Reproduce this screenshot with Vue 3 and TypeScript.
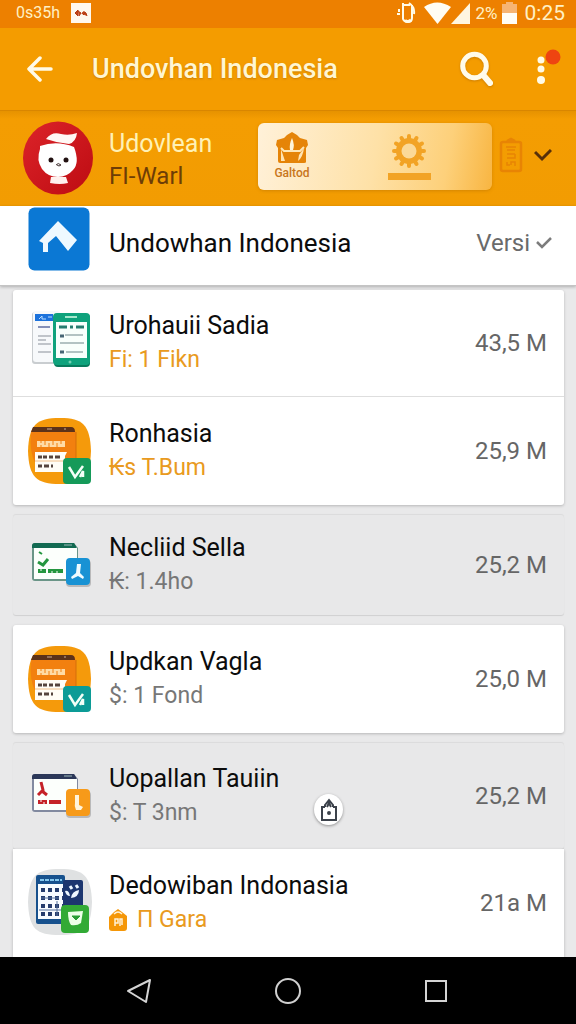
<script setup lang="ts">
type IconKind = 'docs' | 'store' | 'window' | 'calendar'

interface Entry {
  name: string
  detail: string
  size: string
  icon: IconKind
  tone: 'green' | 'teal' | 'blue' | 'orange'
  accent?: boolean
  bag?: boolean
  share?: boolean
}

interface Group {
  variant: 'card' | 'muted' | 'muted-roomy' | 'last'
  entries: Entry[]
}

const groups: Group[] = [
  {
    variant: 'card',
    entries: [
      { name: 'Urohauii Sadia', detail: 'Fi: 1 Fikn', size: '43,5 M', icon: 'docs', tone: 'green', accent: true },
      { name: 'Ronhasia', detail: '₭s T.Bum', size: '25,9 M', icon: 'store', tone: 'green', accent: true },
    ],
  },
  {
    variant: 'muted',
    entries: [{ name: 'Necliid Sella', detail: '₭: 1.4ho', size: '25,2 M', icon: 'window', tone: 'blue' }],
  },
  {
    variant: 'card',
    entries: [{ name: 'Updkan Vagla', detail: '$: 1 Fond', size: '25,0 M', icon: 'store', tone: 'teal' }],
  },
  {
    variant: 'muted-roomy',
    entries: [{ name: 'Uopallan Tauiin', detail: '$: T 3nm', size: '25,2 M', icon: 'window', tone: 'orange', share: true }],
  },
  {
    variant: 'last',
    entries: [{ name: 'Dedowiban Indonasia', detail: 'П Gara', size: '21a M', icon: 'calendar', tone: 'green', accent: true, bag: true }],
  },
]
</script>

<template>
  <div class="screen">
    <div class="status">
      <span class="status-left">0s35h</span>
      <svg class="badge" width="20" height="20" viewBox="0 0 20 20">
        <rect width="20" height="20" fill="#fff8ee" />
        <path d="M4 10l3-3v6zM7 8l3 2-2 3M11 11q1-4 4-1l1 3M12 12l2-2" fill="#c2461c" stroke="#b5380f" stroke-width="1" />
      </svg>
      <span class="spacer"></span>
      <svg width="20" height="24" viewBox="0 0 20 24" fill="none" stroke="#fffbe8" stroke-width="2">
        <path d="M7 2v16q1 3 5 3t4-4V4M7 4h7M1 13h3M3 8v3M13 2q6 4 5 11" /><path d="M9 19q2 3 6 0" stroke-width="3" />
      </svg>
      <svg class="wifi" width="27" height="22" viewBox="0 0 27 22"><path d="M0 5Q13-4 27 5L13.500 22z" fill="#fffdf4" /></svg>
      <svg width="19" height="22" viewBox="0 0 19 22"><path d="M19 1v21H0z" fill="#fff6e0" /></svg>
      <span class="percent">2%</span>
      <svg class="battery" width="15" height="22" viewBox="0 0 15 22">
        <path d="M4 0h7v2h4v9H0V2h4z" fill="#f6b473" /><path d="M0 11h15v11H0z" fill="#fffdf6" />
      </svg>
      <span class="clock">0:25</span>
    </div>

    <header class="appbar">
      <button class="icon-button" aria-label="Back">
        <svg width="26" height="26" viewBox="0 0 26 26" fill="none" stroke="#fffbe8" stroke-width="3.500" stroke-linecap="round" stroke-linejoin="round">
          <path d="M13 2L2 13l11 11M3 13h21" />
        </svg>
      </button>
      <h1>Undovhan Indonesia</h1>
      <button class="icon-button shadowed" aria-label="Search">
        <svg width="34" height="36" viewBox="0 0 34 36" fill="none" stroke="#fffbea" stroke-linecap="round">
          <circle cx="14.500" cy="15" r="11.800" stroke-width="5" /><path d="M24 25l6 7" stroke-width="6" />
        </svg>
      </button>
      <button class="icon-button menu" aria-label="More options">
        <svg width="26" height="42" viewBox="0 0 26 42">
          <g fill="#fffbe8"><circle cx="6" cy="12" r="3.500" /><circle cx="6" cy="21" r="3.500" /><circle cx="6" cy="32" r="4" /></g>
          <circle cx="18" cy="9" r="7.500" fill="#ee4411" />
        </svg>
      </button>
    </header>

    <section class="profile">
      <svg class="avatar" width="70" height="74" viewBox="0 0 70 74">
        <defs><linearGradient id="red" x2="1" y2="1"><stop stop-color="#dc2329" /><stop offset="1" stop-color="#bd0c12" /></linearGradient></defs>
        <ellipse cx="35" cy="37" rx="35" ry="36.500" fill="url(#red)" />
        <path d="M23 18q6-8 15-5 8 2 16-1-1 9-8 11-12-1-23-5z" fill="#fff8f4" />
        <path d="M17 25q17-6 34 1 6 16-1 23-6 7-15 7-10 0-16-8-6-9-2-20z" fill="#fff" />
        <path d="M28 56h15l2 6q-8 2-18 0z" fill="#fff1ee" />
        <circle cx="28" cy="39" r="2.500" fill="#211" /><circle cx="43" cy="39" r="2.500" fill="#211" />
        <path d="M33 44q2-3 5 0-2 2-4 0" fill="none" stroke="#433" stroke-width="1" />
      </svg>
      <div class="profile-text">
        <p class="profile-name">Udovlean</p>
        <p class="profile-sub">FI-Warl</p>
      </div>
      <div class="tabs">
        <button class="tab">
          <svg width="34" height="34" viewBox="0 0 34 34">
            <path d="M1 14L2 9l7-2 3-3 5-3 5 3 3 3 7 2 1 5-2 3v14q0 1-2 1H5q-2 0-2-2V17z" fill="#e58408" />
            <path d="M6 17l3 3h16l4-4" fill="none" stroke="#ffe6b4" stroke-width="2" />
            <path d="M15 19q-1-6 2-12 3 7 1 12z" fill="#fff6dd" /><path d="M6 18l4 12H6zM29 17q-1 9-6 13l1-6z" fill="#ffe4b3" />
          </svg>
          <span>Galtod</span>
        </button>
        <button class="tab active" aria-label="Settings">
          <svg width="34" height="36" viewBox="-17 -18 34 36">
            <g fill="#f2a325">
              <rect v-for="n in 12" :key="n" x="-2" y="-17" width="4" height="9" rx="2" :transform="`rotate(${n * 30})`" />
              <circle r="13" />
            </g>
            <circle r="7.500" fill="#fbd998" />
          </svg>
          <i class="bar"></i>
        </button>
      </div>
      <button class="icon-button clip" aria-label="Notes">
        <svg width="24" height="36" viewBox="0 0 24 36" fill="none" stroke="#e88404" stroke-width="2.500">
          <rect x="2" y="5" width="20" height="29" rx="2" /><path d="M8 4l4-2 4 2z" fill="#e88404" />
          <path d="M7 10h10M8 13h8M8 17h8M8 21h8v-4M8 25v3h3M16 29v-4h-4v3" stroke-width="1.500" />
        </svg>
      </button>
      <button class="icon-button" aria-label="Expand">
        <svg width="18" height="18" viewBox="0 0 18 18" fill="none" stroke="#57300a" stroke-width="3"><path d="M1 3l7 7 9-9" /></svg>
      </button>
    </section>

    <section class="featured">
      <svg width="62" height="64" viewBox="0 0 62 64">
        <rect width="61" height="63" x=".5" y=".5" rx="6" fill="#0b78d4" />
        <path d="M30 14L49 33 40 44 28 29 20 36V45H15V36L11 34z" fill="#eff9ff" />
      </svg>
      <h2>Undowhan Indonesia</h2>
      <button class="version">
        <span>Versi</span>
        <svg width="16" height="14" viewBox="0 0 16 14" fill="none" stroke="#7c7c7c" stroke-width="2.500"><path d="M1 6l5 5 9-9" /></svg>
      </button>
    </section>

    <main class="list">
      <ul v-for="(group, g) in groups" :key="g" :class="['group', group.variant]">
        <li v-for="entry in group.entries" :key="entry.name" class="row">
          <svg class="app-icon" width="64" height="68" viewBox="0 0 64 68">
            <template v-if="entry.icon === 'docs'">
              <rect x="4" y="3" width="28" height="52" rx="3" fill="#c9cdd0" />
              <rect x="5" y="2" width="27" height="51" rx="3" fill="#f7f9fb" />
              <path d="M7 5h18v7H7z" fill="#1c72dc" /><path d="M11 10l3-3v3h4M20 8h4" stroke="#b9dcff" fill="none" />
              <path d="M10 18h12" stroke="#8590b8" stroke-width="2" />
              <path d="M10 27h13M10 31h8M10 35h13M10 43h13" stroke="#aeb3ba" stroke-width="1.500" />
              <rect x="26" y="5" width="36" height="53" rx="4" fill="#087a5c" />
              <rect x="25" y="4" width="37" height="52" rx="4" fill="#0fa27c" />
              <path d="M28 13h31v36H28z" fill="#f8fffc" />
              <path d="M37 8h12" stroke="#a5e8cd" stroke-width="2" /><path d="M31 18h8M42 18h3M48 18h8" stroke="#277c70" stroke-width="3" />
              <path d="M32 27h4M32 43h4" stroke="#476675" stroke-width="3" />
              <path d="M37 26h18M32 34h24M38 43h17" stroke="#9bb0b0" stroke-width="1.500" />
              <circle cx="42" cy="53" r="1.500" fill="#72d0b2" />
            </template>
            <template v-else-if="entry.icon === 'store'">
              <path d="M32 1C55 1 62 8 63 34 62 60 55 67 32 67 8 67 1 60 0 34 1 8 8 1 32 1z" fill="#f59a0b" />
              <path d="M5 11H46l2 5v32H8Q1 35 3 16z" fill="#f2800f" />
              <path d="M5 10h38q4 0 4 5H3z" fill="#5c3219" /><path d="M19 12h5M36 12h2" stroke="#c9aa94" />
              <path d="M48 15v28" stroke="#d56f0b" />
              <path d="M9 24h28v6H9z" fill="#ffdba5" /><path d="M13 24v2M13 28v2M17 24v4M21 26v4M25 24v4M29 26v4M33 24v3" stroke="#f2800f" />
              <path d="M7 35h32l-2 4v16H7z" fill="#fffdf6" /><path d="M7 44h28" stroke="#f2c18b" />
              <path d="M10 40h4M15 40h4M21 40h4M27 40h5M10 49h4M16 49h5M23 49h2" stroke="#55443d" stroke-width="3" />
              <rect x="35" y="41" width="28" height="26" rx="4" :fill="entry.tone === 'teal' ? '#0c9b96' : '#159a59'" />
              <path d="M41 50l6 10 8-11M52 60l3-6v6" fill="none" stroke="#f3fff7" stroke-width="2.500" />
            </template>
            <template v-else-if="entry.icon === 'window'">
              <path d="M7 12h39l4 5v30q0 3-3 3H7q-3 0-3-3V15q0-3 3-3z" :fill="entry.tone === 'blue' ? '#6b9588' : '#828aa0'" />
              <path d="M6 16h43v32H6z" fill="#fcfffc" /><path d="M46 12l3 5H4v-2q0-3 3-3z" :fill="entry.tone === 'blue' ? '#126951' : '#2b3758'" />
              <path d="M36 14h8" stroke="#9fbab9" />
              <g v-if="entry.tone === 'blue'" fill="none" stroke="#24963f">
                <path d="M11 21l3 2" stroke-width="2" /><path d="M10 31l5 3 5-6" stroke-width="3" />
                <path d="M10 40h8M20 40h15" stroke-width="4" /><path d="M13 38v2M24 40v2M29 40v2" stroke="#fff" />
              </g>
              <g v-else fill="none" stroke="#c52228">
                <path d="M13 20l2 8-5 5M14 29l5 4" stroke-width="3" /><path d="M10 40h9M21 40h12" stroke-width="4" /><path d="M13 38v2M16 40v2" stroke="#fff" />
              </g>
              <rect x="38" y="29" width="25" height="27" rx="4" fill="#0003" />
              <rect x="38" y="27" width="24" height="27" rx="4" :fill="entry.tone === 'blue' ? '#1892d4' : '#f79a19'" />
              <path v-if="entry.tone === 'blue'" d="M49 33h4l-1 9 4 4-1 2-5-3-6 3-1-2 5-4z" fill="#effbff" />
              <path v-else d="M47 33h4v10l4 2-2 3h-5q-2-4-1-7z" fill="#fff4dc" />
            </template>
            <template v-else>
              <path d="M32 0C56 0 63 7 64 33 63 60 56 66 32 66 8 66 1 60 0 33 1 7 8 0 32 0z" fill="#dfe1e2" />
              <rect x="8" y="6" width="29" height="49" rx="2" fill="#17518d" /><path d="M10 15h26v35H10z" fill="#f8fcff" />
              <path d="M12 11h22" stroke="#83c6ed" stroke-width="2" stroke-dasharray="4 1" />
              <path d="M13 21h22M13 29h22M13 37h22M13 45h22" stroke="#263d6d" stroke-width="4" stroke-dasharray="4 3" />
              <path d="M13 29h18M29 32v15M11 41h22" stroke="#55719b" />
              <rect x="35" y="11" width="20" height="31" rx="2" fill="#1c366f" />
              <path d="M42 17l2 3M48 16l2 3" stroke="#edf7ff" stroke-width="3" />
              <path d="M37 22q4-1 5 5-4 0-5-5zM43 29q1-7 8-8 0 7-8 8z" fill="#edf7ff" />
              <rect x="33" y="36" width="28" height="28" rx="4" fill="#32aa35" />
              <path d="M40 43l15-1-2 12q-4 3-10 2-3-4-3-13z" fill="#edffe8" /><path d="M44 47h8l-4 4z" fill="#289d34" stroke="#289d34" />
            </template>
          </svg>
          <div class="text">
            <p class="name">{{ entry.name }}</p>
            <p :class="['detail', { accent: entry.accent }]">
              <svg v-if="entry.bag" class="bag" width="18" height="22" viewBox="0 0 18 22">
                <path d="M0 8l5-5 4-3 4 3 5 4v12q0 3-3 3H3q-3 0-3-3z" fill="#f59708" />
                <path d="M5 5q4-4 8 0M6 17v-7h3v4H6M11 17v-7h2v6" fill="none" stroke="#fff1d5" stroke-width="1.500" />
              </svg>
              <span>{{ entry.detail }}</span>
            </p>
          </div>
          <span class="size">{{ entry.size }}</span>
          <button v-if="entry.share" class="share" aria-label="Share">
            <svg width="18" height="24" viewBox="0 0 18 24" fill="none" stroke="#3c424b" stroke-width="2">
              <path d="M5 9H1M2 9v13h14V9M17 9h-4M5 9V7l4-5 4 5v2M7 9l2-4 2 4" /><circle cx="9" cy="15" r="1" fill="#3c424b" />
            </svg>
          </button>
        </li>
      </ul>
    </main>

    <nav class="navbar">
      <button class="icon-button" aria-label="Back">
        <svg width="26" height="28" viewBox="0 0 26 28" fill="none" stroke="#d4d4d4" stroke-width="2" stroke-linejoin="round"><path d="M2 14L24 3 20 25z" /></svg>
      </button>
      <button class="icon-button" aria-label="Home">
        <svg width="28" height="28" viewBox="0 0 28 28" fill="none" stroke="#d0d0d0" stroke-width="2"><circle cx="14" cy="14" r="12" /></svg>
      </button>
      <button class="icon-button" aria-label="Recent apps">
        <svg width="24" height="24" viewBox="0 0 24 24" fill="none" stroke="#d4d4d4" stroke-width="2"><rect x="2" y="2" width="20" height="20" /></svg>
      </button>
    </nav>
  </div>
</template>

<style>
body {
  margin: 0;
}
</style>

<style scoped>
.screen {
  display: flex;
  flex-direction: column;
  min-height: 100vh;
  background: #e9e9ea;
  font-family: Roboto, "Liberation Sans", sans-serif;
  color: #0c0c0c;
}
svg {
  display: block;
  flex: none;
}
p, h1, h2, ul {
  margin: 0;
  padding: 0;
}
button {
  margin: 0;
  padding: 0;
  border: 0;
  background: none;
  font: inherit;
  color: inherit;
}
.icon-button {
  display: flex;
  flex: none;
}
.status {
  display: flex;
  align-items: center;
  height: 28px;
  padding: 0 11px 2px 16px;
  box-sizing: border-box;
  background: #ed8000;
  color: #fff0c4;
  line-height: 24px;
}
.status-left {
  font-size: 16px;
}
.badge {
  margin-left: 11px;
}
.spacer {
  flex: 1;
}
.wifi {
  margin-left: 8px;
}
.percent {
  margin-left: 5px;
  font-size: 17px;
}
.battery {
  margin: 0 8px 0 4px;
}
.clock {
  font-size: 21px;
}
.appbar {
  display: flex;
  align-items: center;
  padding: 0 15px 0 27px;
  height: 82px;
  background: #f49c00;
  border-bottom: 1px solid #d98600;
}
h1 {
  flex: 1;
  margin-left: 39px;
  color: #fff6d2;
  font-size: 27px;
  font-weight: 500;
  line-height: 36px;
  text-shadow: 0 1px 2px #a8600080;
}
.shadowed {
  filter: drop-shadow(0 1px 1px #a8600080);
}
.menu {
  margin-left: 41px;
}
.profile {
  display: flex;
  align-items: center;
  padding: 10px 24px 11px 23px;
  background: linear-gradient(#e69200, #f49d02 8px, #f29c02);
}
.profile-text {
  flex: 1;
  margin-left: 16px;
  padding-top: 4px;
}
.profile-name {
  color: #fff1b5;
  font-size: 25px;
  line-height: 32px;
}
.profile-sub {
  color: #6e3d06;
  font-size: 24px;
  line-height: 32px;
}
.tabs {
  display: grid;
  grid-template-columns: 68px 1fr;
  flex: 0 1 234px;
  height: 67px;
  margin-bottom: 4px;
  border-radius: 6px;
  background: linear-gradient(100deg, #fff1d9, #fee1a7 50%, #fdd07a 80%, #f8b541);
  box-shadow: 0 1px 3px #b8700080;
}
.tab {
  display: flex;
  flex-direction: column;
  align-items: center;
  justify-content: center;
  color: #c8761c;
  font-size: 12px;
  font-weight: 500;
  line-height: 16px;
}
.active {
  gap: 4px;
}
.bar {
  width: 43px;
  height: 7px;
  background: #f2a325;
}
.clip {
  margin: 0 11px 6px 7px;
}
.featured {
  display: flex;
  align-items: center;
  padding: 1px 24px 14px 28px;
  background: #fff;
  border-bottom: 1px solid #c4c4c4;
  box-shadow: 0 1px 3px #00000040;
}
h2 {
  flex: 1;
  margin-left: 19px;
  padding-top: 8px;
  font-size: 26px;
  font-weight: 400;
  line-height: 34px;
}
.version {
  display: flex;
  align-items: center;
  gap: 6px;
  padding-top: 8px;
  color: #6a6a6a;
  font-size: 24px;
}
.list {
  display: flex;
  flex: 1;
  flex-direction: column;
  gap: 10px;
  padding: 4px 12px 0 13px;
}
.group {
  list-style: none;
  border-radius: 3px;
}
.card, .last {
  background: #fff;
  box-shadow: 0 1px 3px #00000038;
}
.muted, .muted-roomy {
  background: #e8e8e9;
  box-shadow: 0 1px 1px #0000001c, 0 -1px 1px #00000010;
}
.muted-roomy {
  margin-bottom: -10px;
}
.last {
  flex: 1;
  border-radius: 0;
}
.row {
  position: relative;
  display: flex;
  align-items: center;
  padding: 20px 17px 20px 15px;
}
.row + .row {
  border-top: 1px solid #dedede;
}
.row:not(:last-child) {
  padding-top: 19px;
  padding-bottom: 19px;
}
.muted .row {
  padding-top: 16px;
  padding-bottom: 16px;
}
.muted-roomy .row {
  padding-top: 19px;
  padding-bottom: 19px;
}
.text {
  flex: 1;
  margin-left: 17px;
}
.name {
  font-size: 25px;
  line-height: 34px;
}
.detail {
  display: flex;
  align-items: center;
  gap: 10px;
  color: #777;
  font-size: 23px;
  line-height: 34px;
}
.accent {
  color: #e99a20;
}
.size {
  color: #666;
  font-size: 24px;
  line-height: 34px;
}
.share {
  position: absolute;
  top: 51px;
  left: 301px;
  display: flex;
  align-items: center;
  justify-content: center;
  width: 29px;
  height: 31px;
  border-radius: 50%;
  background: #fff;
  box-shadow: 0 1px 3px #00000060;
}
.navbar {
  display: flex;
  align-items: center;
  justify-content: center;
  gap: 122px;
  height: 67px;
  padding-right: 3px;
  background: #000;
}
</style>
